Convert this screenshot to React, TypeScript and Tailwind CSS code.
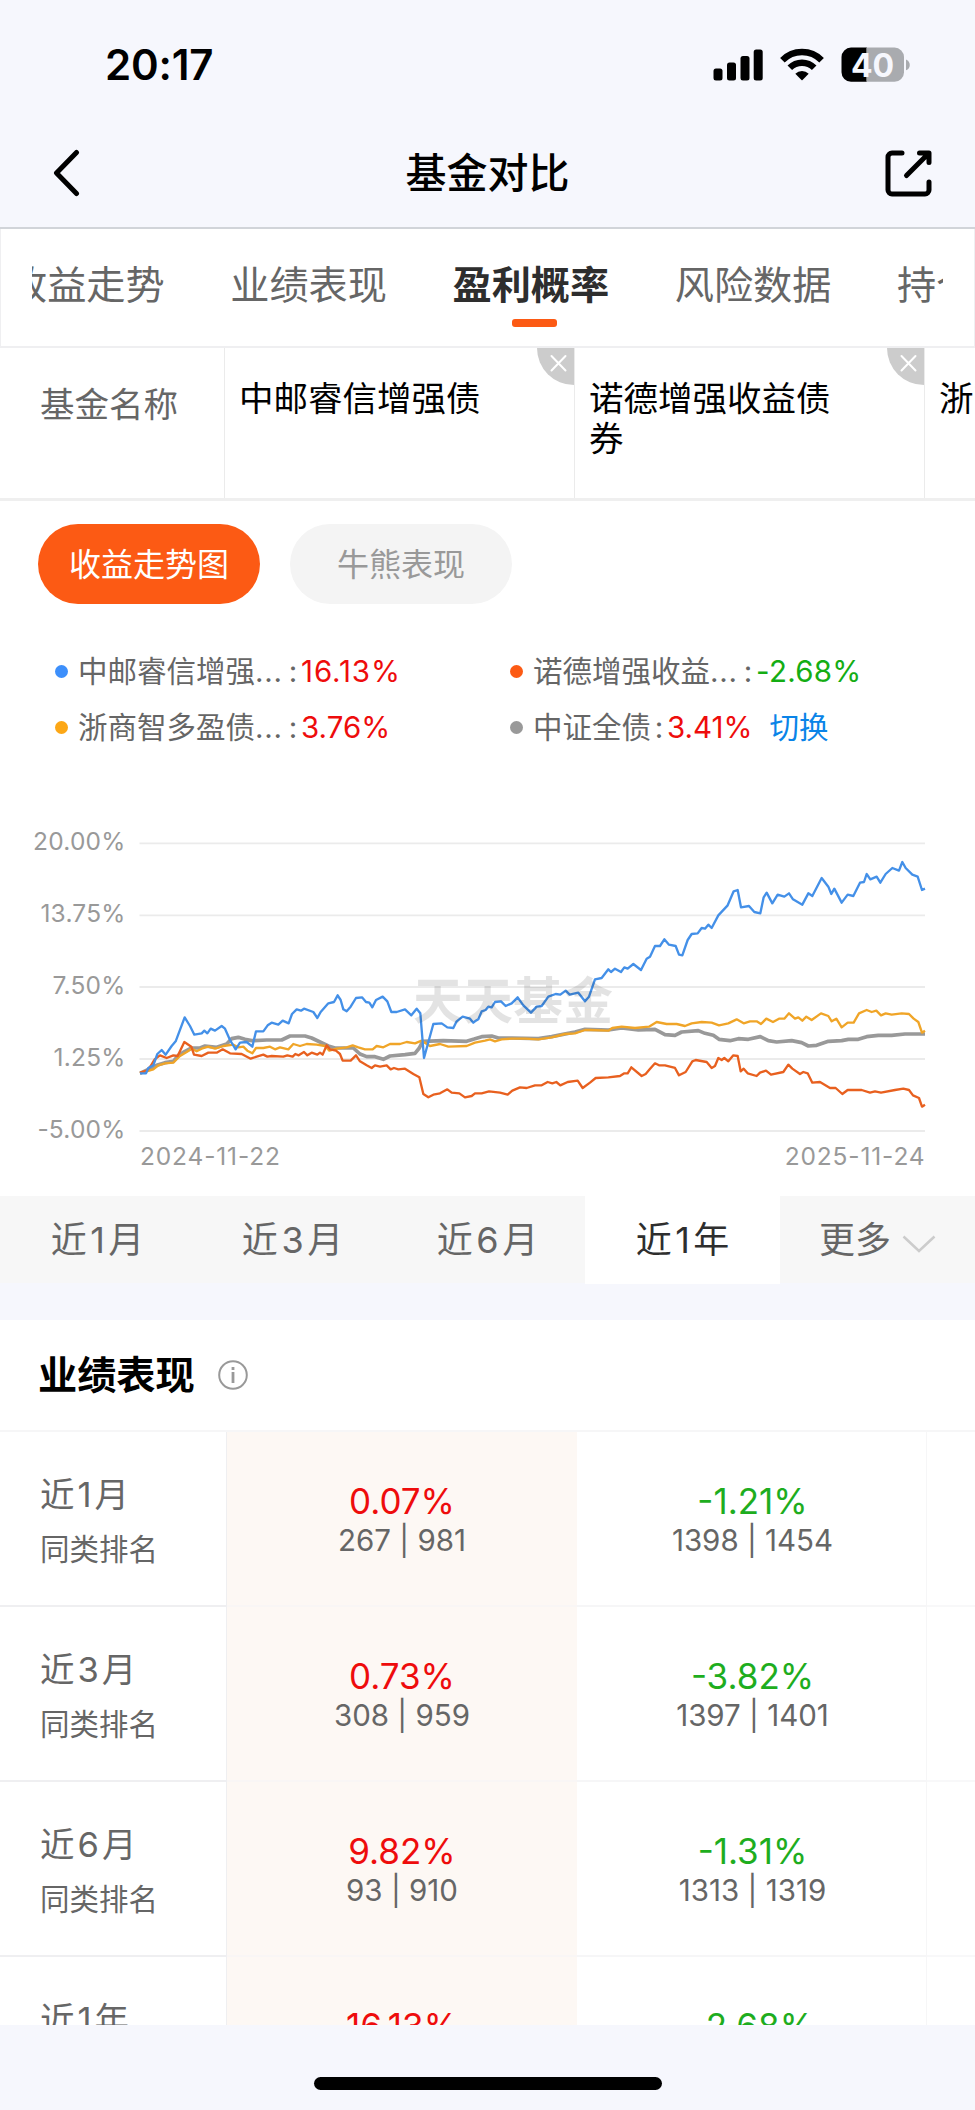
import React from "react";

type Line = { color: string; width: number; points: string[] };

/* Each line is stored as two halves; the second half starts at x = 1425. */
const HALF = 1425;

const LINES: Line[] = [
  {
    color: "#999999",
    width: 11,
    points: [
      "420,820 445,808 470,796 495,788 520,784 535,766 555,754 575,744 600,744 615,738 650,742 680,732 695,716 715,712 735,718 755,722 800,720 845,720 870,708 915,708 935,714 960,726 985,738 1005,744 1060,744 1080,762 1100,770 1125,770 1150,778 1170,768 1215,764 1245,760 1258,744 1268,724 1330,722 1400,724 1420,718",
      "0,716 20,710 50,708 70,714 110,714 190,716 230,710 260,704 300,696 330,688 400,690 440,684 490,690 540,688 570,704 600,706 620,696 670,692 690,700 715,706 732,718 765,722 790,716 820,718 856,710 880,722 905,726 950,722 980,728 1000,738 1025,736 1060,724 1100,722 1120,718 1150,718 1175,710 1210,706 1250,706 1290,702 1350,702",
    ],
  },
  {
    color: "#f0a528",
    width: 7,
    points: [
      "420,820 440,814 460,808 475,796 495,790 520,788 540,768 560,756 575,746 590,754 605,746 625,740 645,746 670,738 700,734 715,742 730,740 742,752 757,760 768,744 790,744 810,740 825,748 840,742 865,748 880,732 900,738 920,732 950,734 975,738 988,752 1010,746 1040,742 1058,736 1075,742 1095,748 1118,748 1130,738 1150,742 1170,732 1200,732 1220,726 1245,730 1265,722 1290,738 1320,732 1345,740 1400,738",
      "0,728 30,722 45,718 60,724 80,718 110,716 150,716 190,718 230,712 270,702 300,700 330,690 345,690 400,692 412,684 440,680 480,684 522,680 545,666 575,672 605,672 630,678 650,670 680,666 710,668 732,676 760,670 785,658 806,670 825,664 845,664 858,672 874,656 894,666 912,656 928,656 942,640 960,656 970,652 982,662 994,650 1010,660 1038,640 1060,648 1070,664 1084,656 1100,682 1118,668 1136,668 1152,640 1175,630 1190,636 1204,632 1218,646 1232,640 1250,644 1280,640 1302,642 1316,656 1330,666 1341,698 1350,692",
    ],
  },
  {
    color: "#e8601f",
    width: 7,
    points: [
      "420,818 440,812 452,798 464,778 480,766 500,774 520,766 533,768 553,726 574,740 582,764 605,768 625,758 650,758 668,748 690,760 725,762 752,776 770,770 790,764 802,770 815,768 850,770 862,766 878,770 886,762 896,766 912,756 922,766 935,758 952,764 960,758 968,764 980,736 990,748 1008,752 1020,762 1028,782 1052,782 1068,766 1080,784 1100,796 1115,804 1125,796 1140,800 1160,796 1172,808 1182,804 1195,808 1215,806 1240,822 1258,832 1270,882 1285,892 1300,884 1320,880 1342,868 1355,878 1378,880 1395,892 1415,888",
      "0,880 20,880 42,874 75,878 98,884 112,872 135,862 155,864 180,856 200,856 218,846 232,850 244,846 256,856 278,846 308,842 323,864 345,848 362,834 400,832 435,828 448,820 458,820 469,802 500,828 512,822 524,808 540,790 552,796 570,796 600,804 612,826 632,816 652,784 662,780 695,786 710,804 720,798 730,774 740,780 748,774 760,784 775,766 788,768 797,814 806,806 818,820 845,828 855,818 873,812 888,824 925,816 940,794 952,806 975,822 985,816 998,820 1012,848 1035,846 1065,864 1082,864 1102,882 1118,870 1160,870 1185,878 1200,874 1218,878 1260,870 1285,866 1302,870 1314,886 1332,894 1341,920 1350,914",
    ],
  },
  {
    color: "#4490e8",
    width: 7,
    points: [
      "420,820 438,820 445,804 460,796 472,762 485,750 497,764 515,738 527,724 554,652 570,678 583,704 605,700 613,692 622,700 632,686 645,692 665,678 675,686 690,720 707,748 720,728 740,726 757,740 768,694 790,694 803,676 815,668 835,674 848,662 866,670 876,642 890,628 903,632 912,626 940,636 952,654 962,636 985,610 1002,606 1013,586 1022,600 1030,628 1040,634 1052,620 1068,594 1086,592 1098,606 1108,608 1117,622 1128,600 1148,590 1162,604 1174,636 1190,636 1215,628 1234,646 1250,626 1261,640 1272,774 1300,672 1325,670 1342,682 1360,684 1370,664 1388,650 1410,656 1420,668",
      "0,664 10,658 20,634 32,630 40,620 50,622 60,606 78,604 92,618 110,610 128,592 145,616 168,638 185,620 200,618 220,590 242,582 256,584 272,572 284,584 310,578 330,604 342,590 360,538 380,534 400,508 408,516 420,506 438,516 448,502 458,506 475,492 498,510 515,476 525,470 540,438 555,438 568,418 582,434 602,438 612,464 622,466 638,420 650,402 668,400 680,384 690,386 700,374 710,384 730,346 758,316 776,274 788,270 798,322 822,318 838,336 856,340 866,292 875,278 892,310 908,284 928,290 942,280 954,298 982,314 1000,280 1012,288 1040,234 1060,260 1069,282 1078,266 1100,308 1118,284 1135,288 1155,248 1167,246 1175,222 1186,238 1205,230 1216,248 1232,222 1252,204 1272,212 1282,186 1292,204 1312,224 1328,230 1341,270 1350,266",
    ],
  },
];

function joinHalves([left, right]: string[]) {
  const shifted = right.split(" ").map((p) => {
    const [x, y] = p.split(",");
    return `${Number(x) + HALF},${y}`;
  });
  return `${left} ${shifted.join(" ")}`;
}

const AXIS = [
  { label: "20.00%", y: 43.3 },
  { label: "13.75%", y: 115.4 },
  { label: "7.50%", y: 187 },
  { label: "1.25%", y: 259 },
  { label: "-5.00%", y: 331 },
];

function StatusBar() {
  return (
    <div className="flex h-[130px] items-center justify-between pr-[65px] pl-[105px]">
      <span className="text-[42px] leading-[50px] font-semibold tracking-[-0.2px]">20:17</span>
      <svg className="h-[36px] w-[197px]" viewBox="0 0 197 36">
        <rect x="0.5" y="21.5" width="9" height="12" rx="2.5" />
        <rect x="14" y="15.5" width="9" height="18" rx="2.5" />
        <rect x="27.5" y="9" width="9" height="24.5" rx="2.5" />
        <rect x="40.7" y="2.5" width="9" height="31" rx="2.5" />
        <g fill="none" stroke="#000" strokeWidth="6.4">
          <path d="M69.4 13.2a27.5 27.5 0 0 1 39.2 0" />
          <path d="M76.8 20.8a17.2 17.2 0 0 1 24.4 0" />
        </g>
        <path d="M82.3 26.8a9.5 9.5 0 0 1 13.4 0l-6.2 6.300a.8.8 0 0 1-1 0z" />
        <path d="M138 .6h16v34.200h-16a9.500 9.500 0 0 1-9.500-9.500V10.100a9.500 9.500 0 0 1 9.500-9.500z" />
        <path d="M153.300 .6h28.200a9.500 9.500 0 0 1 9.500 9.500v15.200a9.500 9.500 0 0 1-9.500 9.500h-28.200z" fill="#a9abaf" />
        <path d="M193 12.500c5 1.800 5 9 0 10.800z" fill="#a9abaf" />
        <text x="159.500" y="29.500" textAnchor="middle" fontSize="32" fontWeight="700" fill="#f6f7fd" fontFamily="Inter">
          40
        </text>
      </svg>
    </div>
  );
}

function NavBar() {
  return (
    <div className="flex h-[99px] items-center justify-between border-b-2 border-[#d1d4d9] pr-[43px] pb-[12px] pl-[52px]">
      <svg className="h-[48px] w-[48px]" viewBox="0 0 48 48" fill="none" stroke="#000" strokeWidth="5" strokeLinecap="round" strokeLinejoin="round">
        <path d="M24.500 3.500 4.500 24l20 20.500" />
      </svg>
      <h1 className="mr-[9px] text-[41px] leading-[50px] font-medium">基金对比</h1>
      <svg className="h-[48px] w-[48px]" viewBox="0 0 48 48" fill="none" stroke="#000" strokeWidth="5" strokeLinecap="round" strokeLinejoin="round">
        <path d="M18 4H8a4 4 0 0 0-4 4v33a4 4 0 0 0 4 4h33a4 4 0 0 0 4-4v-8" />
        <path d="M35.500 4H45v9.500M44 5 22.500 26.500" />
      </svg>
    </div>
  );
}

function Tabs() {
  return (
    <div className="h-[119px] border-x border-b-2 border-[#efeff1] bg-white px-[31px]">
      <div className="-ml-6 flex h-full gap-[65.500px] overflow-hidden text-[39.200px] leading-[58px] text-[#666] [clip-path:inset(0_0_0_24px)]">
        {["收益走势", "业绩表现", "盈利概率", "风险数据", "持仓"].map((t) => (
          <div key={t} className="flex shrink-0 flex-col items-center pt-[27px]">
            <span className={t === "盈利概率" ? "font-bold text-[#2e2e2e]" : ""}>{t}</span>
            {t === "盈利概率" && <i className="mt-[5px] ml-[7px] h-[8px] w-[45px] rounded-[3px] bg-[#fc5a14]" />}
          </div>
        ))}
      </div>
    </div>
  );
}

function Funds() {
  return (
    <div className="flex h-[153px] overflow-hidden border-b-[3px] border-[#efefef] bg-white">
      <div className="w-[225px] shrink-0 border-r border-[#ebebeb] pt-[32px] pl-[40px] text-[34.500px] leading-[50px] text-[#666]">
        基金名称
      </div>
      {["中邮睿信增强债", "诺德增强收益债券", "浙商智多盈债"].map((n) => (
        <div key={n} className="relative w-[350px] shrink-0 border-r border-[#ebebeb] pt-[31px] pr-[80px] pl-[14px] text-[34.500px] leading-[40px]">
          {n}
          <span className="absolute top-0 right-0 flex size-[37px] items-center justify-center rounded-bl-full bg-[#ccc]">
            <svg className="size-[37px]" viewBox="0 0 37 37" stroke="#fff" strokeWidth="2" strokeLinecap="round">
              <path d="m14.500 8 14 14.500m0-14.500-14 14.500" />
            </svg>
          </span>
        </div>
      ))}
    </div>
  );
}

const LEGEND = [
  { dot: "bg-[#3d8ffb]", name: "中邮睿信增强", dots: true, value: "16.13%", tone: "text-[#ee0c0c] tracking-[0.9px]" },
  { dot: "bg-[#fc5a14]", name: "诺德增强收益", dots: true, value: "-2.68%", tone: "text-[#14ad14] tracking-[0.3px]" },
  { dot: "bg-[#fca716]", name: "浙商智多盈债", dots: true, value: "3.76%", tone: "text-[#ee0c0c]" },
  { dot: "bg-[#999]", name: "中证全债", dots: false, value: "3.41%", tone: "text-[#ee0c0c]" },
];

function Legend() {
  return (
    <div className="grid grid-cols-[455px_1fr] pt-[39px] pl-[55px]">
      {LEGEND.map((l) => (
        <div key={l.name} className="flex h-[56px] items-center text-[29.500px] leading-[40px] whitespace-nowrap text-[#666]">
          <i className={"mr-[10px] size-[13px] rounded-full " + l.dot} />
          <span>{l.name}</span>
          {l.dots && <span className="w-[30px] tracking-[0.8px]">...</span>}
          <span className="w-[16px] text-center">:</span>
          <span className={l.tone}>{l.value}</span>
          {!l.dots && <span className="ml-[17px] text-[#0a84e8]">切换</span>}
        </div>
      ))}
    </div>
  );
}

function Chart() {
  return (
    <svg className="h-[400px] w-[975px]" viewBox="0 0 975 400" fontFamily="Inter" fontSize="24.500" fill="#999">
      {AXIS.map((a) => (
        <g key={a.label}>
          <path d={`M139.500 ${a.y}H925`} stroke="#ebebeb" strokeWidth="1.800" />
          <text x="125.500" y={a.y + 7} textAnchor="end" letterSpacing="0.200">
            {a.label}
          </text>
        </g>
      ))}
      <g transform="scale(0.33333)" fill="none" strokeLinejoin="round">
        {LINES.map((l) => (
          <polyline key={l.color} points={joinHalves(l.points)} stroke={l.color} strokeWidth={l.width} />
        ))}
      </g>
      <text x="413" y="219" fontSize="50" fontWeight="700" fill="#000" fillOpacity="0.110" fontFamily="Noto Sans CJK SC">
        天天基金
      </text>
      <text x="140" y="365" letterSpacing="0.850">2024-11-22</text>
      <text x="925.500" y="365" textAnchor="end" letterSpacing="0.850">2025-11-24</text>
    </svg>
  );
}

function Period({ value, gap }: { value: string; gap: string }) {
  return (
    <>
      近<span className={gap}>{value[0]}</span>
      {value[1]}
    </>
  );
}

function Periods() {
  return (
    <div className="grid h-[87px] grid-cols-5 bg-[#f7f7f7] text-[36px] leading-[88px] text-[#666]">
      {["1月", "3月", "6月", "1年"].map((v) => (
        <span key={v} className={v === "1年" ? "bg-white text-center text-[#2e2e2e]" : "text-center"}>
          <Period value={v} gap="mx-[3.500px]" />
        </span>
      ))}
      <span className="flex items-center justify-center gap-[11px]">
        更多
        <svg className="mt-[8px] h-[18px] w-[34px]" viewBox="0 0 34 18" fill="none" stroke="#ccc" strokeWidth="2.500">
          <path d="m1.500 1.500 15.500 14.500L32.500 1.500" />
        </svg>
      </span>
    </div>
  );
}

const ROWS = [
  ["1月", "0.07%", "267 | 981", "-1.21%", "1398 | 1454"],
  ["3月", "0.73%", "308 | 959", "-3.82%", "1397 | 1401"],
  ["6月", "9.82%", "93 | 910", "-1.31%", "1313 | 1319"],
  ["1年", "16.13%", "154 | 866", "-2.68%", "1275 | 1280"],
];

function Table() {
  return (
    <div className="h-[595px] overflow-hidden border-t-2 border-[#f6f6f7]">
      {ROWS.map(([period, own, ownRank, other, otherRank]) => (
        <div key={period} className="grid h-[175px] grid-cols-[227px_350px_350px_1fr] text-[#666]">
          <div className="border-r border-b-2 border-[#efeff1] pt-[37px] pl-[40px]">
            <div className="text-[34.500px] leading-[52px]">
              <Period value={period} gap="mx-[3px]" />
            </div>
            <div className="mt-[2px] text-[29.500px] leading-[52px]">同类排名</div>
          </div>
          <div className="border-b-2 border-[#f9f6f5] bg-[#fdf8f4] pt-[48px] text-center">
            <div className="text-[35px] leading-[42px] text-[#ee0c0c]">{own}</div>
            <div className="text-[29.500px] leading-[36px]">{ownRank}</div>
          </div>
          <div className="border-r border-b-2 border-[#f6f6f7] pt-[48px] pl-[2px] text-center">
            <div className="text-[35px] leading-[42px] text-[#1ead1e]">{other}</div>
            <div className="text-[29.500px] leading-[36px]">{otherRank}</div>
          </div>
          <div className="border-b-2 border-[#f8f8f9]" />
        </div>
      ))}
    </div>
  );
}

export default function App() {
  return (
    <div className="flex h-[2110px] w-[975px] flex-col overflow-hidden bg-[#f6f7fd] font-['Inter','Noto_Sans_CJK_SC',sans-serif] text-black">
      <StatusBar />
      <NavBar />
      <Tabs />
      <Funds />
      <div className="bg-white pt-[23px]">
        <div className="flex gap-[30px] pl-[38px] text-[32px] leading-[82px]">
          <span className="h-[80px] w-[222px] rounded-full bg-[#fc5a14] text-center text-white">收益走势图</span>
          <span className="h-[80px] w-[222px] rounded-full bg-[#f4f4f4] text-center text-[#999]">牛熊表现</span>
        </div>
        <Legend />
        <div className="mt-[45px] h-[396px]">
          <Chart />
        </div>
      </div>
      <Periods />
      <div className="mt-[37px] bg-white">
        <div className="flex h-[110px] items-center gap-[23px] pl-[38px]">
          <h2 className="text-[39.200px] leading-[50px] font-bold">业绩表现</h2>
          <svg className="size-[30px]" viewBox="0 0 30 30" fill="none" stroke="#999" strokeWidth="2">
            <circle cx="15" cy="15" r="13.800" />
            <path d="M15 12v11M15 7v3" strokeWidth="2.800" />
          </svg>
        </div>
        <Table />
      </div>
      <div className="flex flex-1 justify-center pt-[52px]">
        <i className="h-[13px] w-[348px] rounded-full bg-black" />
      </div>
    </div>
  );
}
